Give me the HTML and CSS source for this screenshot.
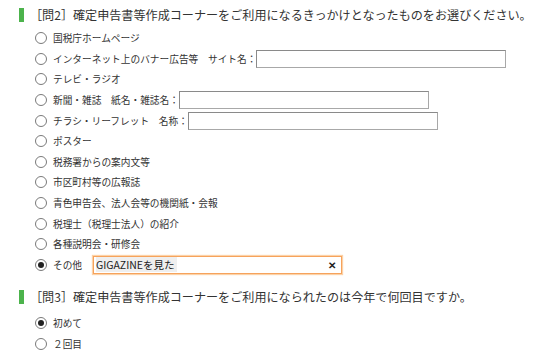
FILE: index.html
```html
<!DOCTYPE html>
<html lang="ja">
<head>
    <meta charset="UTF-8">
    <title>アンケート</title>
    <link rel="stylesheet" href="styles.css">
</head>
<body>

    <!-- 問2 -->
    <div class="question">
        <h2 class="q-title">［問2］確定申告書等作成コーナーをご利用になるきっかけとなったものをお選びください。</h2>
        <ul class="choices">
            <li><span class="radio"></span>国税庁ホームページ</li>
            <li><span class="radio"></span>インターネット上のバナー広告等　サイト名：<span class="text-box"></span></li>
            <li><span class="radio"></span>テレビ・ラジオ</li>
            <li><span class="radio"></span>新聞・雑誌　紙名・雑誌名：<span class="text-box"></span></li>
            <li><span class="radio"></span>チラシ・リーフレット　名称：<span class="text-box"></span></li>
            <li><span class="radio"></span>ポスター</li>
            <li><span class="radio"></span>税務署からの案内文等</li>
            <li><span class="radio"></span>市区町村等の広報誌</li>
            <li><span class="radio"></span>青色申告会、法人会等の機関紙・会報</li>
            <li><span class="radio"></span>税理士（税理士法人）の紹介</li>
            <li><span class="radio"></span>各種説明会・研修会</li>
            <li>
                <span class="radio checked"></span>その他
                <span class="text-box focused">
                    <span class="value">GIGAZINEを見た</span>
                    <span class="clear">✕</span>
                </span>
            </li>
        </ul>
    </div>

    <!-- 問3 -->
    <div class="question">
        <h2 class="q-title">［問3］確定申告書等作成コーナーをご利用になられたのは今年で何回目ですか。</h2>
        <ul class="choices">
            <li><span class="radio checked"></span>初めて</li>
            <li><span class="radio"></span>２回目</li>
        </ul>
    </div>

</body>
</html>
```

FILE: styles.css
```css
html, body {
    height: 350px;
    overflow: hidden;
}

body {
    margin: 0;
    padding: 8px 0 0 19px;
    box-sizing: border-box;
    font-family: "Noto Sans CJK JP", "Noto Sans", sans-serif;
    color: #333;
    background-color: white;
}

.question + .question {
    margin-top: 15px;
}

.question + .question .choices {
    margin-top: 9px;
}

.q-title {
    margin: 0;
    border-left: 5px solid #4cb34c;
    padding-left: 6px;
    font-size: 12.1px;
    font-weight: normal;
    line-height: 14px;
}

.choices {
    list-style: none;
    margin: 6px 0 0 16px;
    padding: 0;
}

.choices li {
    display: flex;
    align-items: center;
    height: 20.6px;
    font-size: 9.7px;
}

.radio {
    width: 10px;
    height: 10px;
    border: 1px solid #7a7a7a;
    border-radius: 50%;
    margin-right: 6px;
    display: flex;
    align-items: center;
    justify-content: center;
    flex-shrink: 0;
}

.radio.checked::after {
    content: "";
    width: 6px;
    height: 6px;
    border-radius: 50%;
    background-color: #222;
}

.text-box {
    width: 248px;
    height: 16px;
    border: 1px solid #a8a8a8;
    border-top-color: #8a8a8a;
    border-left-color: #8a8a8a;
    background-color: white;
}

.text-box.focused {
    margin-left: 11px;
    display: flex;
    align-items: center;
    justify-content: space-between;
    width: 249px;
    padding: 0 5px 0 2px;
    border: 1px solid #f6a35c;
    box-shadow: 0 0 1px 1px #fcd2a8;
    box-sizing: border-box;
    height: 18px;
}

.value {
    font-size: 10.5px;
    color: #222;
    background-color: #efefef;
    padding-right: 2px;
}

.clear {
    font-size: 10px;
    font-weight: bold;
    color: #222;
}
```
